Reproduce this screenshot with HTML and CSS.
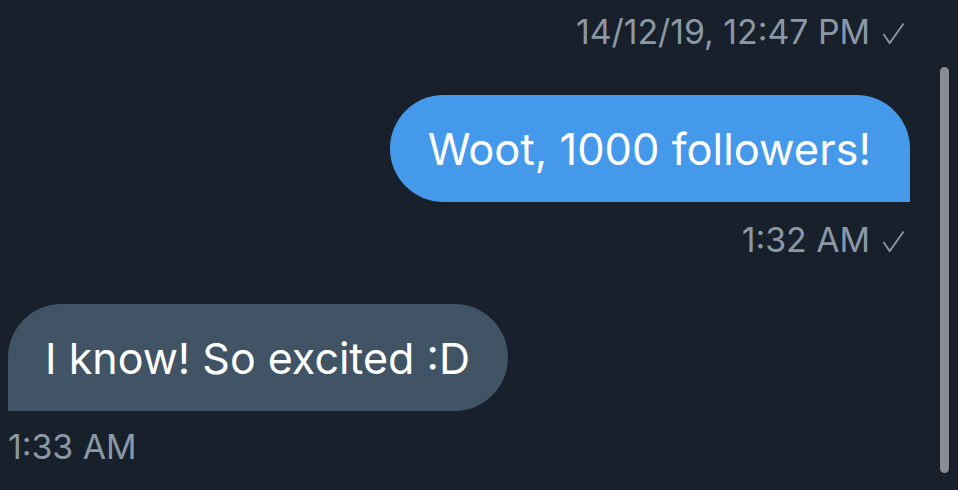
FILE: index.html
```html
<!DOCTYPE html>
<html>
<head>
<meta charset="utf-8">
<link rel="stylesheet" href="styles.css">
</head>
<body>
<div class="chat">
  <div class="meta meta-right meta-top">14/12/19, 12:47 PM <svg class="check" viewBox="0 0 24 24"><path d="M1.5 12.5 L8 22 L22.5 1.5"/></svg></div>
  <div class="row row-out">
    <div class="bubble bubble-out">Woot, 1000 followers!</div>
  </div>
  <div class="meta meta-right">1:32 AM <svg class="check" viewBox="0 0 24 24"><path d="M1.5 12.5 L8 22 L22.5 1.5"/></svg></div>
  <div class="row row-in">
    <div class="bubble bubble-in">I know! So excited :D</div>
  </div>
  <div class="meta meta-left">1:33 AM</div>
</div>
<div class="scrollbar"></div>
</body>
</html>
```

FILE: styles.css
```css
html, body {
  margin: 0;
  padding: 0;
  background: #17202b;
  height: 100%;
  overflow: hidden;
}
body {
  font-family: Inter, "Liberation Sans", sans-serif;
  position: relative;
}
.chat {
  padding: 14px 48px 0 8px;
  display: flex;
  flex-direction: column;
}
.meta {
  color: #8b98a5;
  font-size: 33.8px;
  line-height: 36px;
  display: flex;
  align-items: center;
  gap: 12px;
}
.meta-right { justify-content: flex-end; padding-right: 5px; }
.meta-left { justify-content: flex-start; }
.meta-top { margin-bottom: 45px; }
.check {
  width: 23px;
  height: 23px;
  fill: none;
  stroke: #8b98a5;
  stroke-width: 1.9;
  margin-top: 2px;
}
.row { display: flex; }
.row-out { justify-content: flex-end; margin-bottom: 20px; }
.row-in { justify-content: flex-start; margin-top: 46px; margin-bottom: 18px; }
.bubble {
  color: #ffffff;
  font-size: 43.5px;
  height: 107px;
  box-sizing: border-box;
  display: flex;
  align-items: center;
}
.bubble-out {
  background: #4599ea;
  border-radius: 54px 54px 0 54px;
  padding: 0 39px 0 38px;
}
.bubble-in {
  background: #415466;
  border-radius: 54px 54px 54px 0;
  font-size: 43px;
  padding: 0 38px 0 37px;
}
.scrollbar {
  position: absolute;
  left: 940px;
  top: 67px;
  width: 9px;
  height: 406px;
  border-radius: 5px;
  background: #8a8d93;
}
```
